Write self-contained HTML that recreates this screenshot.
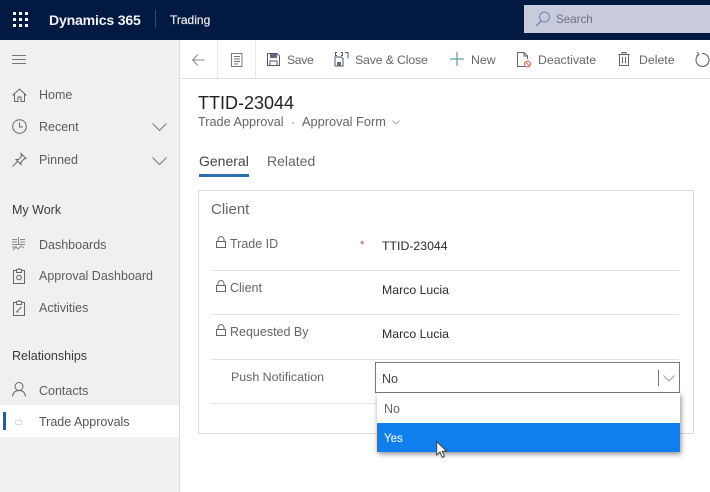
<!DOCTYPE html>
<html><head><meta charset="utf-8"><style>
html,body{margin:0;padding:0;background:#fff}
#p{position:relative;width:710px;height:492px;overflow:hidden;background:#fff;font-family:"Liberation Sans",sans-serif;color:#555}
.t{position:absolute;white-space:nowrap;line-height:16px;font-size:12.5px}
.b{position:absolute}
svg{position:absolute;overflow:visible;fill:none;stroke:#666;stroke-width:1}
.nav{color:#5c5c5c;font-size:12.5px}
.cmd{color:#666;font-size:12.3px}
.v{color:#2b2b2b;font-size:12.3px}
.l{color:#666;font-size:12.5px}
.hr{position:absolute;left:211px;width:468px;height:1px;background:#e2e2e2}
</style></head><body><div id="p">
<div class="b" style="left:0;top:0;width:710px;height:40px;background:#021a42"></div>
<svg style="left:13px;top:12px" width="15" height="15"><g fill="#fff" stroke="none"><rect width="3" height="3"/><rect x="6" width="3" height="3"/><rect x="12" width="3" height="3"/><rect y="6" width="3" height="3"/><rect x="6" y="6" width="3" height="3"/><rect x="12" y="6" width="3" height="3"/><rect y="12" width="3" height="3"/><rect x="6" y="12" width="3" height="3"/><rect x="12" y="12" width="3" height="3"/></g></svg>
<div class="t" style="left:49px;top:12px;color:#f2f2f2;font-size:14.1px;font-weight:bold;letter-spacing:-.2px">Dynamics 365</div>
<div class="b" style="left:155px;top:10px;width:1px;height:18px;background:#39496a"></div>
<div class="t" style="left:170px;top:12px;color:#e6e6e6;font-size:12px;-webkit-text-stroke:.25px #e6e6e6">Trading</div>
<div class="b" style="left:524px;top:5px;width:186px;height:28px;background:#c7cbdb"></div>
<svg style="left:534px;top:10px" width="18" height="18"><circle cx="10.5" cy="7" r="5" stroke="#6f87b5"/><path d="M7 11L2 16" stroke="#6f87b5" stroke-width="1.3"/></svg>
<div class="t" style="left:556px;top:12px;color:#6d7280;font-size:11.6px">Search</div>

<div class="b" style="left:0;top:40px;width:179px;height:452px;background:#f0f0f0"></div>
<div class="b" style="left:179px;top:40px;width:1px;height:452px;background:#dcdcdc"></div>
<svg style="left:12px;top:55px" width="14" height="10"><path d="M0 .5H14M0 4.500H14M0 8.500H14" stroke="#777"/></svg>
<svg style="left:12px;top:88px" width="15" height="14"><path d="M.5 7.500L7.500 1l7 6.500M2.500 6v7.500h3.500V9h3v4.500h3.500V6"/></svg>
<div class="t nav" style="left:39px;top:87px">Home</div>
<svg style="left:12px;top:119px" width="15" height="15"><circle cx="7.500" cy="7.500" r="6.800"/><path d="M7.500 3.500V8H11"/></svg>
<div class="t nav" style="left:39px;top:119px">Recent</div>
<svg style="left:152px;top:123px" width="15" height="8"><path d="M.5.500L7.500 7.500 14.500.500" stroke="#777"/></svg>
<svg style="left:12px;top:153px" width="15" height="14"><path d="M9 .5l5 5-2 .5-3 3 0 2.500-5-5 2.500 0 3-3zM5.500 8.500L.5 13.500"/></svg>
<div class="t nav" style="left:39px;top:152px">Pinned</div>
<svg style="left:152px;top:157px" width="15" height="8"><path d="M.5.500L7.500 7.500 14.500.500" stroke="#777"/></svg>
<div class="t" style="left:12px;top:202px;color:#3a3a3a">My Work</div>
<svg style="left:12px;top:237px" width="14" height="14"><path d="M0 2.500H5M0 5H5M0 7.500H13M0 10H5M8 2.500H13M8 5H13M6.500 0V8M1 13l3-3 2 2 3-3 3 2" stroke="#888"/></svg>
<div class="t nav" style="left:39px;top:237px">Dashboards</div>
<svg style="left:13px;top:268px" width="12" height="16"><path d="M3.500 2.500H.5v13h11v-13H8.500M3.500 4.500V1.500h1.500L6 .5l1 1h1.500v3z"/><circle cx="6" cy="9.500" r="2.300"/></svg>
<div class="t nav" style="left:39px;top:268px">Approval Dashboard</div>
<svg style="left:13px;top:300px" width="12" height="16"><path d="M3.500 2.500H.5v13h11v-13H8.500M3.500 4.500V1.500h1.500L6 .5l1 1h1.500v3zM3.500 12l5-5M3.500 12h2"/></svg>
<div class="t nav" style="left:39px;top:300px">Activities</div>
<div class="t" style="left:12px;top:348px;color:#3a3a3a">Relationships</div>
<svg style="left:12px;top:382px" width="14" height="15"><circle cx="7" cy="4.500" r="4"/><path d="M.5 14.500c.5-4 3-6 6.500-6s6 2 6.500 6"/></svg>
<div class="t nav" style="left:39px;top:383px">Contacts</div>
<div class="b" style="left:0;top:405px;width:179px;height:32px;background:#fff"></div>
<div class="b" style="left:3px;top:412px;width:3px;height:18px;background:#1360c0"></div>
<svg style="left:15px;top:417px" width="8" height="8"><path d="M.5 3.500h6v4h-6zM5 3.500V.5" stroke="#ddd"/></svg>
<div class="t" style="left:39px;top:414px;color:#555">Trade Approvals</div>

<div class="b" style="left:180px;top:78px;width:530px;height:1px;background:#e3e3e3"></div>
<div class="b" style="left:217px;top:40px;width:1px;height:38px;background:#e8e8e8"></div>
<div class="b" style="left:255px;top:40px;width:1px;height:38px;background:#e8e8e8"></div>
<svg style="left:192px;top:54px" width="13" height="12"><path d="M12.500 6H1M6 .5L.7 6 6 11.500" stroke="#888"/></svg>
<svg style="left:231px;top:53px" width="12" height="14"><path d="M.5.500h10.500v13H.5zM3 3.500h6M3 6h6M3 8.500h6M3 11h4" stroke="#777"/></svg>
<svg style="left:267px;top:53px" width="13" height="13"><path d="M.5.500h9.500l2.500 2.500v9.500H.5z" stroke="#4d5a6c"/><rect x="3" y="1" width="7" height="4" fill="#5f6b7c" stroke="none"/><rect x="3" y="8" width="7" height="4.500" stroke="#4d5a6c"/></svg>
<div class="t cmd" style="left:287px;top:52px;letter-spacing:-.4px">Save</div>
<svg style="left:334px;top:52px" width="15" height="15"><path d="M1 5h6.500l1.500 1.500V14H1z" stroke="#4d5a6c"/><rect x="3" y="10" width="4" height="4" fill="#5f6b7c" stroke="none"/><path d="M3 .5H1.500v3H3M7 .5h1.500v3H7M11 .5h3v6" stroke="#4d5a6c"/></svg>
<div class="t cmd" style="left:355px;top:52px;letter-spacing:-.15px">Save &amp; Close</div>
<svg style="left:450px;top:52px" width="14" height="14"><path d="M7 0V14M0 7H14" stroke="#5f9f98" stroke-width="1.200"/></svg>
<div class="t cmd" style="left:471px;top:52px">New</div>
<svg style="left:517px;top:52px" width="14" height="16"><path d="M9 14.500H.5V.5h6.500l3.500 3.500v3M7 .5V4h3.500" stroke="#666"/><circle cx="10.500" cy="12" r="3" stroke="#d8685c"/><path d="M8.500 10l4 4" stroke="#d8685c"/></svg>
<div class="t cmd" style="left:538px;top:52px">Deactivate</div>
<svg style="left:618px;top:52px" width="12" height="14"><path d="M.5 2.500h11M4 2.500V.5h4v2M1.500 2.500v11h9v-11M4.500 5v6.500M7.500 5v6.500" stroke="#666"/></svg>
<div class="t cmd" style="left:639px;top:52px">Delete</div>
<svg style="left:695px;top:51px" width="15" height="16"><path d="M4 3.500a6.500 6.500 0 1 0 3-1M2 1l2 2.500-2.500 1.500" stroke="#555"/></svg>

<div class="t" style="left:198px;top:93px;color:#222;font-size:18px;line-height:20px">TTID-23044</div>
<div class="t" style="left:198px;top:114px;color:#666;font-size:12.7px">Trade Approval</div>
<div class="t" style="left:291px;top:114px;color:#777;font-size:12px">·</div>
<div class="t" style="left:302px;top:114px;color:#666;font-size:12.8px">Approval Form</div>
<svg style="left:392px;top:120px" width="8" height="5"><path d="M.5.500L4 4 7.500.500" stroke="#aaa"/></svg>
<div class="t" style="left:199px;top:153px;color:#444;font-size:14px">General</div>
<div class="t" style="left:267px;top:153px;color:#666;font-size:14px">Related</div>
<div class="b" style="left:199px;top:174px;width:50px;height:3px;background:#2d6eb5"></div>

<div class="b" style="left:198px;top:190px;width:494px;height:242px;border:1px solid #dcdcdc"></div>
<div class="t" style="left:211px;top:202px;color:#666;font-size:15px">Client</div>
<svg style="left:216px;top:236px" width="10" height="12"><path d="M.5 5.500h9v6h-9zM2 5.500V3.500a3 3 0 0 1 6 0v2" stroke="#666"/></svg>
<div class="t l" style="left:230px;top:236px">Trade ID</div>
<div class="t" style="left:360px;top:237px;color:#c0504d;font-size:11px">*</div>
<div class="t v" style="left:382px;top:238px">TTID-23044</div>
<div class="hr" style="top:270px"></div>
<svg style="left:216px;top:280px" width="10" height="12"><path d="M.5 5.500h9v6h-9zM2 5.500V3.500a3 3 0 0 1 6 0v2" stroke="#666"/></svg>
<div class="t l" style="left:230px;top:280px">Client</div>
<div class="t v" style="left:382px;top:282px">Marco Lucia</div>
<div class="hr" style="top:314px"></div>
<svg style="left:216px;top:324px" width="10" height="12"><path d="M.5 5.500h9v6h-9zM2 5.500V3.500a3 3 0 0 1 6 0v2" stroke="#666"/></svg>
<div class="t l" style="left:230px;top:324px">Requested By</div>
<div class="t v" style="left:382px;top:326px">Marco Lucia</div>
<div class="hr" style="top:359px"></div>
<div class="t l" style="left:231px;top:369px;font-size:12.4px">Push Notification</div>
<div class="hr" style="top:403px"></div>

<div class="b" style="left:377px;top:393px;width:303px;height:59px;box-shadow:1px 2px 5px rgba(0,0,0,.45);background:#fff"></div>
<div class="b" style="left:375px;top:362px;width:303px;height:29px;border:1px solid #777;background:#fff"></div>
<div class="t" style="left:382px;top:371px;color:#444">No</div>
<div class="b" style="left:658px;top:370px;width:1px;height:16px;background:#777"></div>
<svg style="left:663px;top:375px" width="12" height="7"><path d="M.5.500L6 6 11.500.500" stroke="#999"/></svg>
<div class="t" style="left:384px;top:401px;color:#666">No</div>
<div class="b" style="left:377px;top:423px;width:303px;height:29px;background:#0f7ff0"></div>
<div class="t" style="left:384px;top:431px;color:#dfeeff;font-size:11.500px;-webkit-text-stroke:.2px #dfeeff">Yes</div>
<svg style="left:436px;top:441px" width="12" height="18"><path d="M.7.700V14l3.200-3 2.300 5.500 2.300-1-2.300-5.300h4.300z" fill="#fff" stroke="#444"/></svg>
</div></body></html>
